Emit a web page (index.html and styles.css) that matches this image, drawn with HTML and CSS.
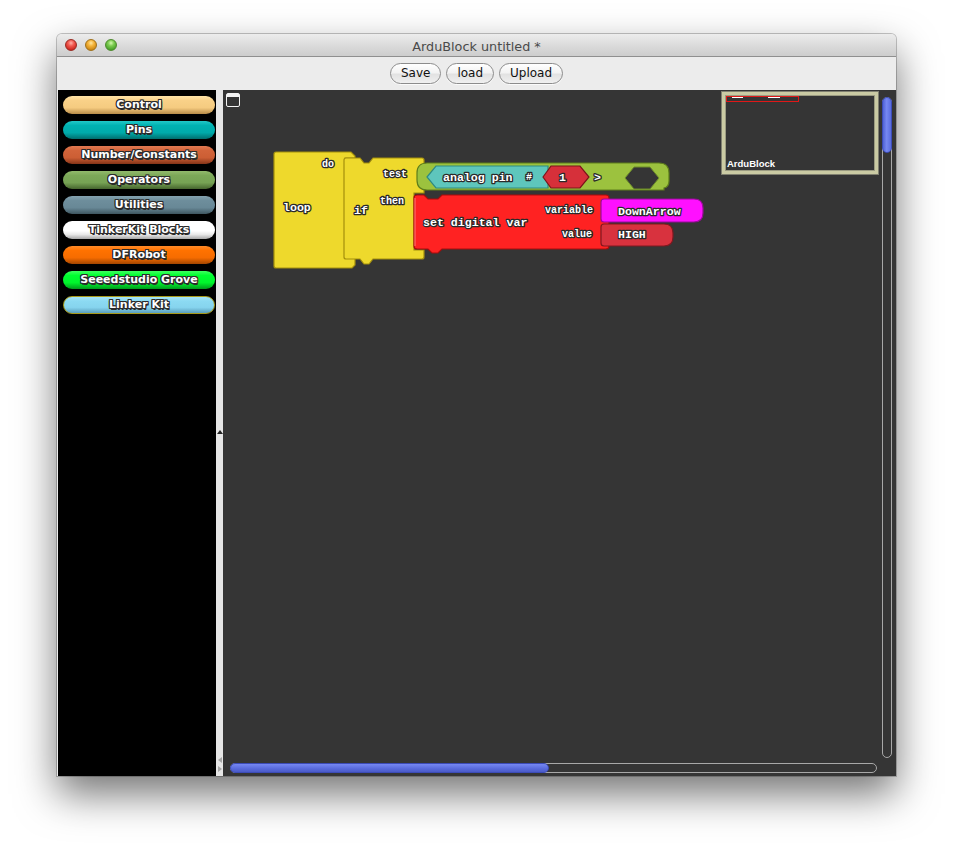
FILE: index.html
```html
<!DOCTYPE html>
<html>
<head>
<meta charset="utf-8">
<title>ArduBlock untitled *</title>
<link rel="stylesheet" href="styles.css">
</head>
<body>
<div class="window">
  <div class="titlebar">
    <div class="lights">
      <span class="light red"></span>
      <span class="light yellow"></span>
      <span class="light green"></span>
    </div>
    <div class="title">ArduBlock untitled *</div>
    <div></div>
  </div>
  <div class="toolbar">
    <button class="btn">Save</button>
    <button class="btn">load</button>
    <button class="btn">Upload</button>
  </div>
  <div class="main">
    <div class="palette">
      <div class="pill p-control">Control</div>
      <div class="pill p-pins">Pins</div>
      <div class="pill p-number">Number/Constants</div>
      <div class="pill p-operators">Operators</div>
      <div class="pill p-utilities">Utilities</div>
      <div class="pill p-tinker">TinkerKit Blocks</div>
      <div class="pill p-dfrobot">DFRobot</div>
      <div class="pill p-seeed">Seeedstudio Grove</div>
      <div class="pill p-linker">Linker Kit</div>
    </div>
    <div class="splitter">
      <span class="caret"></span>
      <span class="arrows"><span class="tri-left"></span><span class="tri-right"></span></span>
    </div>
    <div class="canvas">
      <svg class="blocks" width="673" height="686" viewBox="223 90 673 686" xmlns="http://www.w3.org/2000/svg">
        <!-- loop block -->
        <path class="yel" d="M276,152 H351 L355,156 V158 H345 V258 H355 V265 L352,268 H276 Q274,268 274,266 V154 Q274,152 276,152 Z"/>
        <!-- if block -->
        <path class="yel" d="M346,158 H360 L364,163 H369 L373,158 H422 Q424,158 424,160 V193 H414 V250 H424 V257 Q424,259 422,259 H373 L369,264 H364 L360,259 H346 Q344,259 344,257 V160 Q344,158 346,158 Z"/>
        <!-- set digital var -->
        <path class="red" d="M417,195 H424 L428,199 H438 L442,195 H606 Q609,195 609,198 V246 Q609,249 606,249 H442 L438,253 H432 L428,249 H417 Q414,249 414,246 V198 Q414,195 417,195 Z"/>
        <path class="redhi" d="M415,198 V246"/>
        <!-- DownArrow -->
        <path class="mag" d="M604,199 H694 Q703,199 703,208 V213 Q703,222 694,222 H604 Q601,222 601,219 V202 Q601,199 604,199 Z"/>
        <!-- HIGH -->
        <path class="high" d="M604,224 H664 Q673,224 673,233 V237 Q673,246 664,246 H604 Q601,246 601,243 V227 Q601,224 604,224 Z"/>
        <!-- comparison -->
        <path class="grn" d="M427,163 H659 Q669,163 669,173 V181 Q669,187 664,188 V190 H427 Q417,190 417,180 V173 Q417,163 427,163 Z"/>
        <path class="hole" d="M625,178 L634,167 H650 L659,178 L650,189 H634 Z"/>
        <!-- analog pin -->
        <path class="teal" d="M427,177 L436,166 H548 V188 H436 Z"/>
        <!-- number 1 -->
        <path class="num" d="M543,177 L551,166 H580 L589,177 L580,188 H551 Z"/>

        <text class="bt" x="283" y="211">loop</text>
        <text class="bs" x="322" y="167">do</text>
        <text class="bt" x="354" y="214">if</text>
        <text class="bs" x="383" y="177">test</text>
        <text class="bs" x="380" y="204">then</text>
        <text class="bt" x="443" y="181">analog pin</text>
        <text class="bs" x="526" y="180">#</text>
        <text class="bt" x="559" y="181">1</text>
        <text class="bt" x="594" y="181">&gt;</text>
        <text class="bt" x="423" y="226">set digital var</text>
        <text class="bs" x="545" y="213">variable</text>
        <text class="bs" x="562" y="237">value</text>
        <text class="bt" x="618" y="215">DownArrow</text>
        <text class="bt" x="618" y="238">HIGH</text>
      </svg>
      <div class="tool"></div>
      <div class="minimap">
        <div class="view"><span class="tick t1"></span><span class="tick t2"></span></div>
        <div class="mm-label">ArduBlock</div>
      </div>
      <div class="vscroll"><div class="vthumb"></div></div>
      <div class="hscroll"><div class="hthumb"></div></div>
    </div>
  </div>
</div>
</body>
</html>
```
FILE: styles.css
```css
html, body {
  margin: 0;
  padding: 0;
  background: #ffffff;
}
body {
  width: 953px;
  height: 856px;
  overflow: hidden;
  font-family: "DejaVu Sans", "Liberation Sans", sans-serif;
}
.window {
  margin: 34px 0 0 57px;
  width: 839px;
  height: 742px;
  display: flex;
  flex-direction: column;
  background: #ececec;
  border-radius: 5px 5px 0 0;
  box-shadow: 0 18px 40px rgba(0,0,0,0.55), 0 0 0 1px rgba(0,0,0,0.22);
}
.titlebar {
  height: 22px;
  border-bottom: 1px solid #8f8f8f;
  border-radius: 5px 5px 0 0;
  background: linear-gradient(#ececec, #dadada 55%, #cdcdcd);
  display: grid;
  grid-template-columns: 1fr auto 1fr;
  align-items: center;
}
.lights {
  display: flex;
  gap: 8px;
  padding-left: 8px;
}
.light {
  width: 12px;
  height: 12px;
  border-radius: 50%;
  box-sizing: border-box;
}
.red { background: radial-gradient(circle at 50% 30%, #ffb0a8 0, #f25a50 35%, #c21a12 90%); border: 1px solid #9a2a22; }
.yellow { background: radial-gradient(circle at 50% 30%, #ffe6a0 0, #f5b43a 35%, #c07a0a 90%); border: 1px solid #a07018; }
.green { background: radial-gradient(circle at 50% 30%, #d4f8b0 0, #7ccc50 35%, #3a9420 90%); border: 1px solid #4e8a2e; }
.title {
  font-size: 12.8px;
  color: #4a4a4a;
  padding-top: 2px;
}
.toolbar {
  height: 33px;
  display: flex;
  justify-content: center;
  align-items: center;
  gap: 5px;
}
.btn {
  height: 21px;
  padding: 0 10px;
  border: 1px solid #8c8c8c;
  border-radius: 11px;
  background: linear-gradient(#ffffff, #f3f3f3 45%, #e2e2e2 55%, #f0f0f0);
  font-family: "DejaVu Sans", sans-serif;
  font-size: 12px;
  color: #111;
  line-height: 19px;
  box-shadow: 0 1px 0 rgba(255,255,255,0.8);
}
.main {
  height: 686px;
  display: flex;
  padding-left: 1px;
}
.palette {
  width: 158px;
  background: #000;
  display: flex;
  flex-direction: column;
  gap: 7px;
  padding: 6px 1px 0 5px;
  box-sizing: border-box;
}
.pill {
  height: 18px;
  border-radius: 9px;
  text-align: center;
  font-family: "DejaVu Sans", sans-serif;
  font-weight: bold;
  font-size: 11px;
  line-height: 18px;
  color: #fff;
  text-shadow: -1px 0 0 #2b2b2b, 1px 0 0 #2b2b2b, 0 -1px 0 #2b2b2b, 0 1px 0 #2b2b2b, 1px 1px 0 #2b2b2b, -1px -1px 0 #2b2b2b, 1px -1px 0 #2b2b2b, -1px 1px 0 #2b2b2b, 1px 2px 0 #2b2b2b;
  box-sizing: border-box;
}
.p-control { background: linear-gradient(#ffe4a8, #f9d188 25%, #f5cb80 65%, #b98c48); }
.p-pins { background: linear-gradient(#22c8c8, #00b2b2 25%, #00aaaa 65%, #006e6e); }
.p-number { background: linear-gradient(#e27a52, #d2643a 25%, #cc5e34 65%, #863418); }
.p-operators { background: linear-gradient(#92ba6c, #7ca858 25%, #76a254 65%, #46652e); }
.p-utilities { background: linear-gradient(#84a2b0, #6e8e9c 25%, #688896 65%, #3f5660); }
.p-tinker { background: linear-gradient(#ffffff, #ffffff 55%, #e8e8e8 75%, #a8a8a8); }
.p-dfrobot { background: linear-gradient(#ff8a28, #ff7200 25%, #f66c00 65%, #a44600); }
.p-seeed { background: linear-gradient(#40ff60, #00ff30 25%, #00f52c 65%, #009a1c); }
.p-linker { background: linear-gradient(#a6e6fa, #8cdaf2 25%, #86d4ee 65%, #5a9ebc); border: 1.5px solid #a89a1a; line-height: 15px; }
.splitter {
  width: 7px;
  background: #e6e6e6;
  display: flex;
  flex-direction: column;
  align-items: center;
}
.caret {
  margin-top: 340px;
  width: 0;
  height: 0;
  border-left: 3px solid transparent;
  border-right: 3px solid transparent;
  border-bottom: 4px solid #222;
}
.arrows {
  margin-top: auto;
  margin-bottom: 4px;
  display: flex;
  flex-direction: column;
  gap: 3px;
}
.tri-left {
  width: 0; height: 0;
  border-top: 3px solid transparent;
  border-bottom: 3px solid transparent;
  border-right: 4px solid #a6a6a6;
}
.tri-right {
  width: 0; height: 0;
  border-top: 3px solid transparent;
  border-bottom: 3px solid transparent;
  border-left: 4px solid #a6a6a6;
}
.canvas {
  position: relative;
  width: 673px;
  background: #353535;
  overflow: hidden;
}
.blocks {
  position: absolute;
  left: 0;
  top: 0;
}
.yel { fill: #eed92c; stroke: #a48f0c; stroke-width: 1.2; }
.red { fill: #ff2222; stroke: #a80c0c; stroke-width: 1.2; }
.redhi { stroke: #ff7a7a; stroke-width: 1; fill: none; }
.mag { fill: #ff10ff; stroke: #9a0a9a; stroke-width: 1.2; }
.high { fill: #d8323e; stroke: #801820; stroke-width: 1.2; }
.grn { fill: #9cc23e; stroke: #5e7e1c; stroke-width: 1.2; }
.hole { fill: #353535; stroke: #6e8e2a; stroke-width: 1; }
.teal { fill: #5ec6bc; stroke: #2e8a82; stroke-width: 1.2; }
.num { fill: #d6303a; stroke: #7a141a; stroke-width: 1.2; }
.bt, .bs {
  font-family: "Liberation Mono", "DejaVu Sans Mono", monospace;
  font-weight: bold;
  fill: #ffffff;
  stroke: #2a2a2a;
  stroke-width: 2.6px;
  stroke-linejoin: round;
  paint-order: stroke;
}
.bt { font-size: 11.6px; }
.bs { font-size: 10px; }
.tool {
  position: absolute;
  left: 3px;
  top: 3px;
  width: 14px;
  height: 14px;
  box-sizing: border-box;
  border: 1.5px solid #f4f4f4;
  border-radius: 2px;
}
.tool::before {
  content: "";
  display: block;
  height: 3px;
  background: #f4f4f4;
}
.minimap {
  position: absolute;
  left: 499px;
  top: 2px;
  width: 156px;
  height: 82px;
  box-sizing: border-box;
  border: 3px solid #cbcba4;
  box-shadow: 0 0 0 1px #808070, inset 0 0 0 1px #9c9c82;
  background: #353535;
  display: flex;
  flex-direction: column;
  justify-content: space-between;
}
.view {
  position: relative;
  margin: 1px 0 0 1px;
  width: 73px;
  height: 6px;
  box-sizing: border-box;
  border: 1px solid #e01818;
}
.tick {
  position: absolute;
  top: 0;
  height: 1px;
  background: #fff;
}
.t1 { left: 5px; width: 11px; }
.t2 { left: 41px; width: 12px; }
.mm-label {
  font-family: "Liberation Sans", sans-serif;
  font-weight: bold;
  font-size: 9.5px;
  color: #fff;
  padding: 0 0 2px 2px;
}
.vscroll {
  position: absolute;
  left: 659px;
  top: 7px;
  width: 10px;
  height: 661px;
  box-sizing: border-box;
  border: 1px solid #a8a8a8;
  border-radius: 5px;
}
.vthumb {
  margin: -1px;
  height: 56px;
  border-radius: 5px;
  background: linear-gradient(to right, #5062d6, #7688f2 45%, #5a6cde);
  border: 1px solid #3c4cb8;
  box-sizing: border-box;
}
.hscroll {
  position: absolute;
  left: 7px;
  top: 673px;
  width: 647px;
  height: 10px;
  box-sizing: border-box;
  border: 1px solid #a8a8a8;
  border-radius: 5px;
}
.hthumb {
  margin: -1px;
  width: 319px;
  height: 10px;
  border-radius: 5px;
  background: linear-gradient(#7688f2, #5a6cde 55%, #4a5ac8);
  border: 1px solid #3c4cb8;
  box-sizing: border-box;
}
```
